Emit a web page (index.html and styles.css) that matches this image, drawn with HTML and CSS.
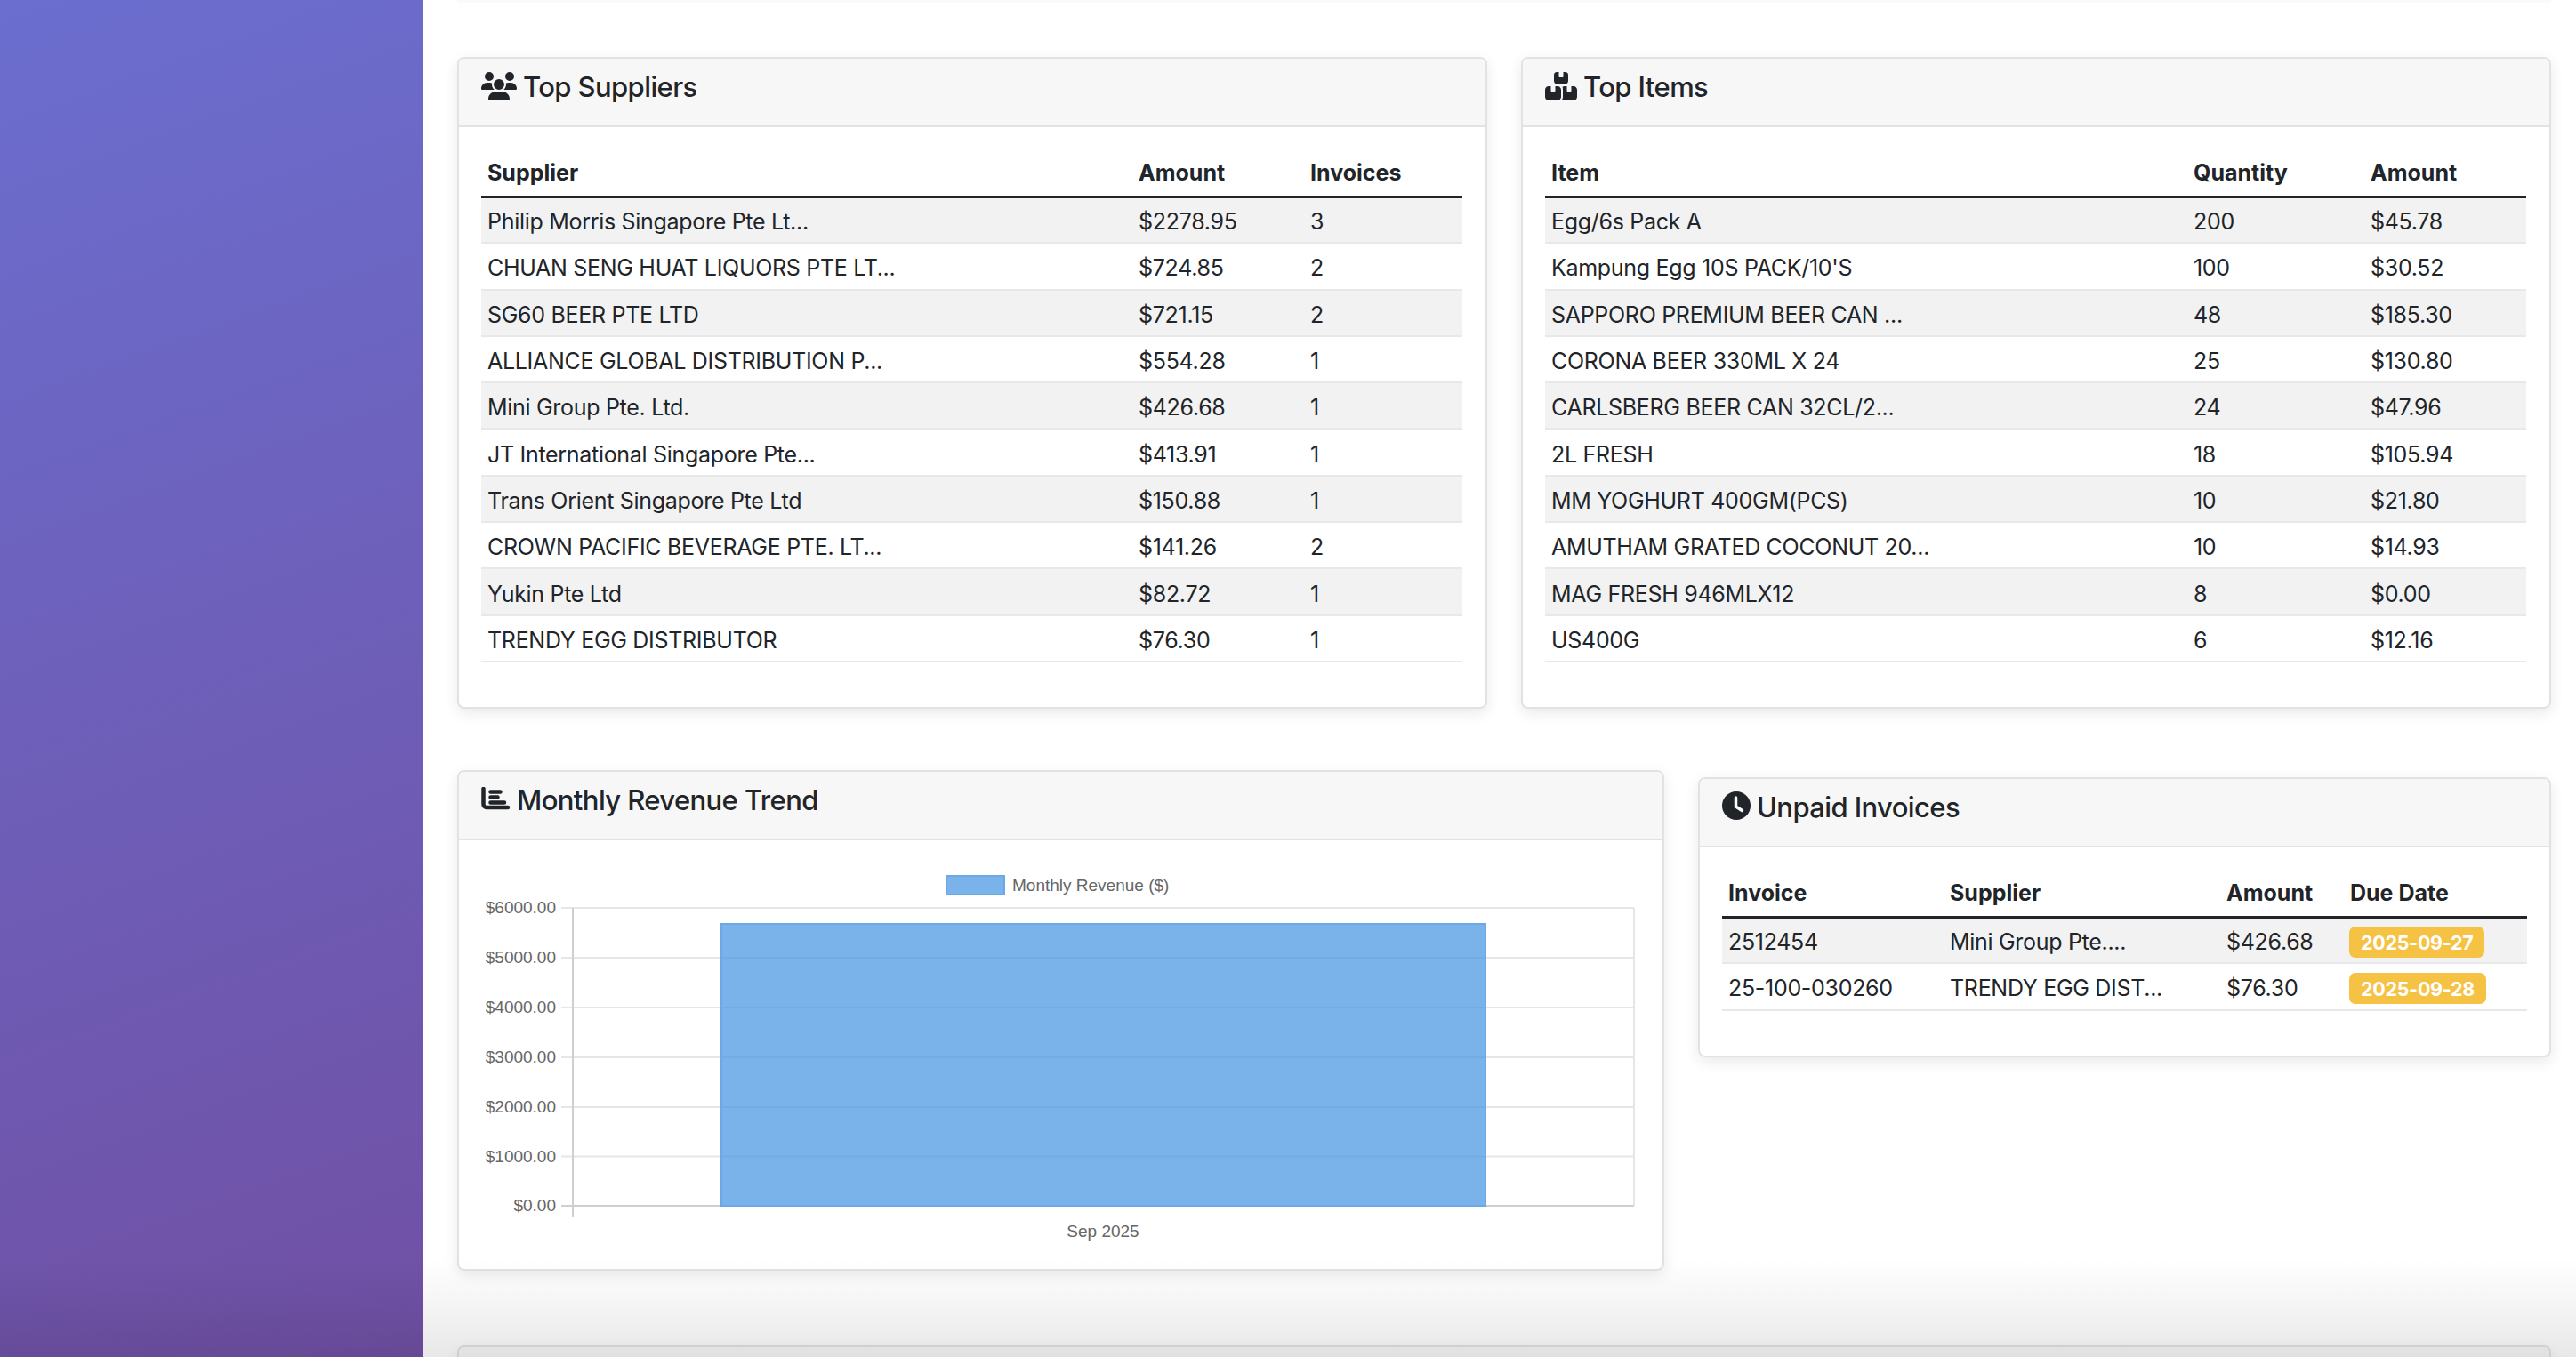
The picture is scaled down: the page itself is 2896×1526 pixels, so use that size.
FILE: index.html
```html
<!DOCTYPE html>
<html lang="en">
<head>
<meta charset="utf-8">
<title>Dashboard</title>
<link rel="stylesheet" href="styles.css">
</head>
<body>
<div class="app">
  <aside class="sidebar"></aside>
  <main class="main">
    <div class="prev-edge"></div>
    <section class="row">
      <article class="card half">
        <header class="card-header">
          <svg class="icon icon-users" viewBox="0 0 640 512"><path d="M144 0a80 80 0 1 1 0 160A80 80 0 1 1 144 0zM512 0a80 80 0 1 1 0 160A80 80 0 1 1 512 0zM0 298.700C0 239.800 47.800 192 106.700 192h42.700c15.900 0 31 3.500 44.600 9.700c-1.300 7.200-1.900 14.700-1.900 22.300c0 38.200 16.800 72.500 43.300 96c-.2 0-.4 0-.7 0H21.300C9.600 320 0 310.400 0 298.700zM405.300 320c-.2 0-.4 0-.7 0c26.600-23.500 43.300-57.800 43.300-96c0-7.600-.7-15-1.900-22.300c13.600-6.300 28.700-9.700 44.600-9.700h42.700C592.200 192 640 239.800 640 298.700c0 11.800-9.600 21.300-21.300 21.300H405.300zM224 224a96 96 0 1 1 192 0 96 96 0 1 1 -192 0zM128 485.300C128 411.700 187.700 352 261.300 352H378.700C452.300 352 512 411.700 512 485.300c0 14.700-11.900 26.700-26.700 26.700H154.700c-14.700 0-26.700-11.900-26.700-26.700z"/></svg>
          <h5 class="card-title">Top Suppliers</h5>
        </header>
        <div class="card-body">
          <table class="table suppliers">
            <thead><tr><th class="c1">Supplier</th><th class="c2">Amount</th><th class="c3">Invoices</th></tr></thead>
            <tbody>
              <tr><td>Philip Morris Singapore Pte Lt...</td><td>$2278.95</td><td>3</td></tr>
              <tr><td>CHUAN SENG HUAT LIQUORS PTE LT...</td><td>$724.85</td><td>2</td></tr>
              <tr><td>SG60 BEER PTE LTD</td><td>$721.15</td><td>2</td></tr>
              <tr><td>ALLIANCE GLOBAL DISTRIBUTION P...</td><td>$554.28</td><td>1</td></tr>
              <tr><td>Mini Group Pte. Ltd.</td><td>$426.68</td><td>1</td></tr>
              <tr><td>JT International Singapore Pte...</td><td>$413.91</td><td>1</td></tr>
              <tr><td>Trans Orient Singapore Pte Ltd</td><td>$150.88</td><td>1</td></tr>
              <tr><td>CROWN PACIFIC BEVERAGE PTE. LT...</td><td>$141.26</td><td>2</td></tr>
              <tr><td>Yukin Pte Ltd</td><td>$82.72</td><td>1</td></tr>
              <tr><td>TRENDY EGG DISTRIBUTOR</td><td>$76.30</td><td>1</td></tr>
            </tbody>
          </table>
        </div>
      </article>
      <article class="card half">
        <header class="card-header">
          <svg class="icon icon-boxes" viewBox="0 0 576 512"><path d="M248 0H208c-26.500 0-48 21.500-48 48V160c0 35.300 28.700 64 64 64H352c35.300 0 64-28.700 64-64V48c0-26.500-21.500-48-48-48H328V80c0 8.800-7.200 16-16 16H264c-8.800 0-16-7.200-16-16V0zM64 256c-35.300 0-64 28.700-64 64V448c0 35.300 28.700 64 64 64H224c35.300 0 64-28.700 64-64V320c0-35.300-28.700-64-64-64H184v80c0 8.800-7.200 16-16 16H120c-8.800 0-16-7.200-16-16V256H64zM352 512H512c35.300 0 64-28.700 64-64V320c0-35.300-28.700-64-64-64H472v80c0 8.800-7.200 16-16 16H408c-8.800 0-16-7.200-16-16V256H352c-15 0-28.800 5.200-39.600 13.800c4.900 15.400 7.600 31.700 7.600 50.200V448c0 23.800-8.800 45.500-23.200 64z"/></svg>
          <h5 class="card-title">Top Items</h5>
        </header>
        <div class="card-body">
          <table class="table items">
            <thead><tr><th class="c1">Item</th><th class="c2">Quantity</th><th class="c3">Amount</th></tr></thead>
            <tbody>
              <tr><td>Egg/6s Pack A</td><td>200</td><td>$45.78</td></tr>
              <tr><td>Kampung Egg 10S PACK/10'S</td><td>100</td><td>$30.52</td></tr>
              <tr><td>SAPPORO PREMIUM BEER CAN ...</td><td>48</td><td>$185.30</td></tr>
              <tr><td>CORONA BEER 330ML X 24</td><td>25</td><td>$130.80</td></tr>
              <tr><td>CARLSBERG BEER CAN 32CL/2...</td><td>24</td><td>$47.96</td></tr>
              <tr><td>2L FRESH</td><td>18</td><td>$105.94</td></tr>
              <tr><td>MM YOGHURT 400GM(PCS)</td><td>10</td><td>$21.80</td></tr>
              <tr><td>AMUTHAM GRATED COCONUT 20...</td><td>10</td><td>$14.93</td></tr>
              <tr><td>MAG FRESH 946MLX12</td><td>8</td><td>$0.00</td></tr>
              <tr><td>US400G</td><td>6</td><td>$12.16</td></tr>
            </tbody>
          </table>
        </div>
      </article>
    </section>

    <section class="row row-second">
      <article class="card trend">
        <header class="card-header">
          <svg class="icon icon-chart" viewBox="0 0 34 30"><path class="chart-strokes" d="M2.500 2v17.500a3.500 3.500 0 0 0 3.500 3.500H30M10.500 5.500h11M10.500 11.500h8M10.500 17.500h15.500"/></svg>
          <h5 class="card-title">Monthly Revenue Trend</h5>
        </header>
        <div class="chart-body">
          <svg class="chart" viewBox="516 945 1353 482">
            <g class="grid">
              <path d="M631 1021H1837M631 1077H1837M631 1133H1837M631 1189H1837M631 1245H1837M631 1300.500H1837M1837 1021V1356"/>
            </g>
            <path class="axis" d="M644 1021V1369M631 1356H1837"/>
            <rect class="bar" x="811" y="1039" width="859" height="317"/>
            <rect class="bar" x="1064" y="985" width="65" height="21"/>
            <text class="chart-text" x="1138" y="1002">Monthly Revenue ($)</text>
            <g class="y-labels">
              <text x="625" y="1027">$6000.00</text>
              <text x="625" y="1083">$5000.00</text>
              <text x="625" y="1139">$4000.00</text>
              <text x="625" y="1195">$3000.00</text>
              <text x="625" y="1251">$2000.00</text>
              <text x="625" y="1307">$1000.00</text>
              <text x="625" y="1362">$0.00</text>
            </g>
            <text class="x-label" x="1240" y="1391">Sep 2025</text>
          </svg>
        </div>
      </article>
      <article class="card unpaid">
        <header class="card-header">
          <svg class="icon icon-clock" viewBox="0 0 32 32"><circle cx="16" cy="16" r="16"/><path class="clock-hands" d="M15.500 7v10l7 4.500"/></svg>
          <h5 class="card-title">Unpaid Invoices</h5>
        </header>
        <div class="card-body">
          <table class="table invoices">
            <thead><tr><th class="c1">Invoice</th><th class="c2">Supplier</th><th class="c3">Amount</th><th class="c4">Due Date</th></tr></thead>
            <tbody>
              <tr><td>2512454</td><td>Mini Group Pte....</td><td>$426.68</td><td><span class="badge">2025-09-27</span></td></tr>
              <tr><td>25-100-030260</td><td>TRENDY EGG DIST...</td><td>$76.30</td><td><span class="badge">2025-09-28</span></td></tr>
            </tbody>
          </table>
        </div>
      </article>
    </section>

    <section class="card next-card"><div class="next-header"></div></section>
  </main>
  <div class="bottom-fade"></div>
</div>
</body>
</html>
```

FILE: styles.css
```css
* { box-sizing: border-box; }
html, body { margin: 0; padding: 0; height: 100%; overflow: hidden; background: #fff; }
body { font-family: Inter, "Noto Sans", sans-serif; color: #212529; }

.app { display: flex; height: 1526px; overflow: hidden; position: relative; }
.sidebar { width: 476px; flex: none; background: linear-gradient(160deg, #6b6ecf 0%, #7050a4 100%); }
.main { flex: 1; min-width: 0; padding: 0 28px 0 38px; position: relative; }

.prev-edge { height: 3px; margin-bottom: 61px; background: #fafafa; }

.row { display: flex; gap: 38px; align-items: flex-start; }
.row-second { margin-top: 69px; }

.card {
  background: #fff;
  border: 2px solid #e2e2e2;
  border-radius: 8px;
  box-shadow: 0 5px 16px rgba(0, 0, 0, 0.09);
  overflow: hidden;
}
.half { width: 1158px; height: 733px; }
.trend { width: 1357px; height: 563px; }
.unpaid { width: 959px; height: 315px; margin-top: 8px; }
.next-card { margin-top: 84px; height: 60px; }
.next-header { height: 100%; background: #f7f7f7; }

.card-header {
  height: 77px;
  display: flex;
  align-items: flex-start;
  padding: 13px 25px 0;
  background: #f7f7f7;
  border-bottom: 2px solid #e2e2e2;
}
.card-title { margin: 0; font-size: 31px; line-height: 38px; font-weight: 500; letter-spacing: -0.6px; }
.icon { display: block; flex: none; fill: #212529; }
.icon-users { width: 40px; height: 32px; margin: 2px 7px 0 0; }
.icon-boxes { width: 36px; height: 32px; margin: 2px 7px 0 0; }
.icon-chart { width: 34px; height: 30px; margin: 4px 6px 0 0; }
.icon-clock { width: 32px; height: 32px; margin: 1px 7px 0 0; }
.chart-strokes { fill: none; stroke: #212529; stroke-width: 4.500; stroke-linecap: round; }
.clock-hands { fill: none; stroke: #fff; stroke-width: 3.500; stroke-linecap: round; stroke-linejoin: round; }

.card-body { padding: 27px 25px 0; }
.table { border-collapse: collapse; table-layout: fixed; width: 1103px; font-size: 25px; letter-spacing: -0.3px; }
.table th { height: 51px; padding: 0 7px 2px; text-align: left; font-weight: 700; letter-spacing: 0; vertical-align: middle; border-bottom: 3px solid #212529; }
.table td { height: 52.300px; padding: 4px 7px 0; white-space: nowrap; vertical-align: middle; border-bottom: 2px solid #e6e8ea; }
.table tbody tr:nth-child(odd) { background: #f2f2f2; }

.suppliers .c1 { width: 732px; }
.suppliers .c2 { width: 193px; }
.items .c1 { width: 722px; }
.items .c2 { width: 199px; }
.invoices { width: 905px; }
.invoices .c1 { width: 249px; }
.invoices .c2 { width: 311px; }
.invoices .c3 { width: 139px; }

.badge {
  display: inline-block;
  height: 35px;
  line-height: 37px;
  margin-left: -1px;
  padding: 0 13px;
  border-radius: 7px;
  background: #f6c244;
  color: #fff;
  font-size: 21.500px;
  font-weight: 700;
}

.chart-body { height: 484px; }
.chart { display: block; width: 1353px; height: 482px; font-family: "Liberation Sans", Arial, sans-serif; font-size: 19px; fill: #666; }
.grid path { fill: none; stroke: #e6e6e6; stroke-width: 2; }
.axis { fill: none; stroke: #cfcfcf; stroke-width: 2; }
.bar { fill: rgba(70, 148, 226, 0.72); stroke: #6aa8e6; stroke-width: 2; }
.y-labels text { text-anchor: end; }
.x-label { text-anchor: middle; }

.bottom-fade {
  position: absolute;
  left: 0;
  right: 0;
  bottom: 0;
  height: 110px;
  background: linear-gradient(rgba(0, 0, 0, 0), rgba(0, 0, 0, 0.09));
  pointer-events: none;
}
```
